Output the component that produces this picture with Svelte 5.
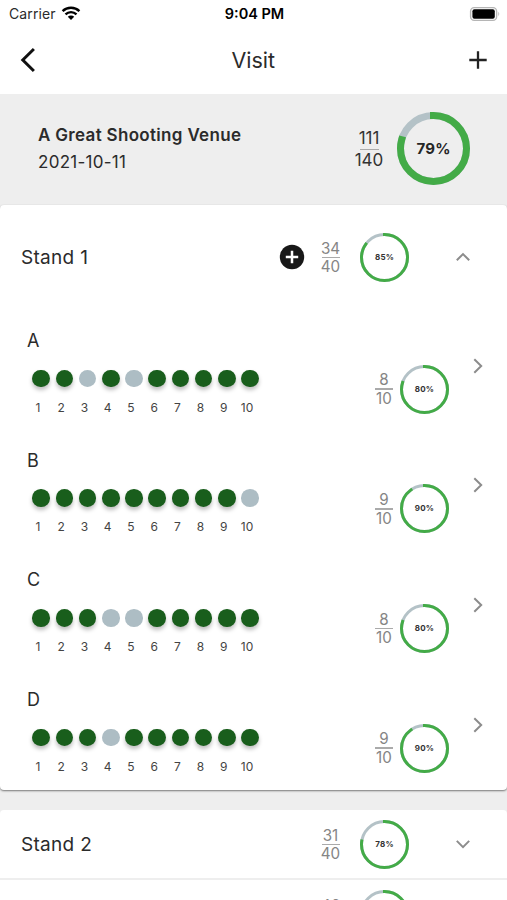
<script lang="ts">
  type Round = { name: string; shots: number[] }

  const rounds: Round[] = [
    { name: 'A', shots: [1, 1, 0, 1, 0, 1, 1, 1, 1, 1] },
    { name: 'B', shots: [1, 1, 1, 1, 1, 1, 1, 1, 1, 0] },
    { name: 'C', shots: [1, 1, 1, 0, 0, 1, 1, 1, 1, 1] },
    { name: 'D', shots: [1, 1, 1, 0, 1, 1, 1, 1, 1, 1] },
  ]

  const collapsed = [
    { name: 'Stand 2', hits: 31, total: 40 },
    { name: 'Stand 3', hits: 46, total: 60 },
  ]

  const hitCount = (r: Round) => r.shots.filter((s) => s === 1).length
  const pct = (hits: number, total: number) => Math.round((hits / total) * 100)
</script>

{#snippet gauge(hits: number, total: number, size: number, stroke: number)}
  {@const r = (size - stroke) / 2}
  <svg class="gauge" class:big={size > 60} width={size} height={size} viewBox="0 0 {size} {size}">
    <circle class="track" cx={size / 2} cy={size / 2} {r} stroke-width={stroke} />
    <circle
      class="value" cx={size / 2} cy={size / 2} {r} stroke-width={stroke} pathLength="100"
      stroke-dasharray="{(hits / total) * 100} 100" transform="rotate(-90 {size / 2} {size / 2})"
    />
    <text x={size / 2} y={size / 2} dy="0.36em">{pct(hits, total)}%</text>
  </svg>
{/snippet}

{#snippet fraction(hits: number, total: number)}
  <div class="fraction">
    <span>{hits}</span>
    <i class="bar"></i>
    <span>{total}</span>
  </div>
{/snippet}

<div class="screen">
  <div class="status">
    <div class="carrier">
      <span>Carrier</span>
      <svg width="20" height="15" viewBox="0 0 20 15">
        <path d="M1.6 5.2A12 12 0 0 1 18.4 5.2M4.5 8.3A8 8 0 0 1 15.5 8.3" fill="none" stroke="#000" stroke-width="2.4" />
        <path d="M10 14L6.8 10.7A4.6 4.6 0 0 1 13.2 10.7Z" />
      </svg>
    </div>
    <span class="clock">9:04 PM</span>
    <svg class="battery" width="32" height="16" viewBox="0 0 32 16">
      <rect x="1.6" y="1.6" width="26" height="12.8" rx="3.6" fill="#fff" stroke="#b5b5b5" stroke-width="1.4" />
      <rect x="3.4" y="3.3" width="22.4" height="9.4" rx="2" />
      <path d="M29.3 5.8Q31.2 8 29.3 10.2Z" fill="#b5b5b5" />
    </svg>
  </div>

  <div class="navbar">
    <svg width="20" height="28" viewBox="0 0 20 28"><path d="M15.9 3L4.8 14L15.9 25" fill="none" stroke="#111" stroke-width="3" /></svg>
    <h1>Visit</h1>
    <svg width="20" height="20" viewBox="0 0 20 20"><path d="M10 1.3V18.7M1.3 10H18.7" stroke="#222" stroke-width="2.3" /></svg>
  </div>

  <div class="venue">
    <div class="venue-info">
      <strong>A Great Shooting Venue</strong>
      <span>2021-10-11</span>
    </div>
    {@render fraction(111, 140)}
    {@render gauge(111, 140, 73, 7)}
  </div>

  <section class="card open">
    <div class="stand-head">
      <span class="stand-name">Stand 1</span>
      <svg class="add" width="26" height="26" viewBox="0 0 26 26">
        <circle cx="13" cy="13" r="12.2" fill="#181818" />
        <path d="M13 6.8V19.2M6.8 13H19.2" stroke="#fff" stroke-width="2.5" />
      </svg>
      {@render fraction(34, 40)}
      {@render gauge(34, 40, 49, 3)}
      <svg class="chev" width="18" height="12" viewBox="0 0 18 12"><path d="M2.8 9.3L9 3.1L15.2 9.3" /></svg>
    </div>
    {#each rounds as round (round.name)}
      <div class="round">
        <div class="shots">
          <span class="round-name">{round.name}</span>
          <div class="dots">
            {#each round.shots as shot}
              <span class="cell"><i class="dot" class:hit={shot === 1}></i></span>
            {/each}
          </div>
          <div class="nums">
            {#each round.shots as _, i}
              <span class="cell">{i + 1}</span>
            {/each}
          </div>
        </div>
        <div class="score">
          {@render fraction(hitCount(round), round.shots.length)}
          {@render gauge(hitCount(round), round.shots.length, 49, 3)}
        </div>
        <svg class="chev go" width="12" height="18" viewBox="0 0 12 18"><path d="M2.3 2.2L9.2 9L2.3 15.8" /></svg>
      </div>
    {/each}
  </section>

  <section class="card">
    {#each collapsed as stand (stand.name)}
      <div class="stand-head closed">
        <span class="stand-name">{stand.name}</span>
        {@render fraction(stand.hits, stand.total)}
        {@render gauge(stand.hits, stand.total, 49, 3)}
        <svg class="chev" width="18" height="12" viewBox="0 0 18 12"><path d="M2.8 2.9L9 9.1L15.2 2.9" /></svg>
      </div>
    {/each}
  </section>
</div>

<style>
:global(body) { background: #eee; overflow: hidden; }
.screen {
  width: 507px; height: 900px; overflow: hidden; background: #eee; color: #2b2b2b;
  font-family: Inter, "Liberation Sans", sans-serif; display: flex; flex-direction: column;
}
.screen > * { flex: 0 0 auto; box-sizing: border-box; }
svg { display: block; flex: 0 0 auto; }

.status {
  display: grid; grid-template-columns: 1fr auto 1fr; align-items: center;
  height: 28px; padding: 0 7px 1px 9px; background: #fff; font-size: 14px;
}
.carrier { display: flex; align-items: center; gap: 5px; letter-spacing: 0.1px; }
.clock { font-weight: 600; font-size: 14.5px; color: #000; }
.battery { justify-self: end; margin-right: -1px; }

.navbar {
  display: grid; grid-template-columns: 1fr auto 1fr; align-items: center;
  height: 66px; padding: 0 19.5px 2px 18px; background: #fff;
}
.navbar h1 { margin: 0; padding-left: 1px; font-size: 21.5px; font-weight: 400; line-height: 28px; }
.navbar svg:last-child { justify-self: end; }

.venue { display: flex; align-items: center; height: 110.5px; padding: 0 37px 1px 38px; }
.venue-info { flex: 1; display: flex; flex-direction: column; padding-top: 1px; font-size: 17px; line-height: 27px; }
.venue-info strong { font-weight: 600; letter-spacing: 0.32px; }
.venue-info span { letter-spacing: 0.27px; }
.venue .fraction { width: 34px; margin-right: 11px; padding-top: 1px; font-size: 17px; line-height: 20.5px; color: #333; }
.venue .bar { width: 19px; }

.fraction {
  display: flex; flex-direction: column; align-items: center; width: 24px;
  font-size: 15.2px; line-height: 17px; color: #858585;
}
.bar { width: 18px; height: 1.5px; background: #aaa; }

.gauge circle { fill: none; }
.track { stroke: #b4c2c7; }
.value { stroke: #43ab47; stroke-linecap: square; }
.gauge text { font-size: 8px; font-weight: 700; letter-spacing: 0.2px; text-anchor: middle; fill: #333; }
.gauge.big text { font-size: 15px; fill: #262626; }

.card { background: #fff; border-radius: 4px; }
.open { height: 585.5px; margin-bottom: 20px; box-shadow: 0 1px 2px rgba(0, 0, 0, 0.5); }
.stand-head { display: flex; align-items: center; box-sizing: border-box; height: 106.8px; padding: 0 35px 1.5px 21px; }
.stand-head.closed { height: 70px; border-bottom: 2px solid #eee; padding-bottom: 0; }
.stand-name { flex: 1; font-size: 19px; letter-spacing: 0.3px; padding-top: 1px; }
.add { margin-right: 13px; }
.stand-head .fraction { width: 26px; margin-right: 16.5px; padding-top: 1px; }
.stand-head .chev { margin-left: 45px; }
.chev path { fill: none; stroke: #8c8c8c; stroke-width: 2; }

.round { display: flex; box-sizing: border-box; height: 119.67px; padding: 17px 23px 0 27px; }
.shots { flex: 1; }
.round-name { display: block; padding-top: 0.6px; font-size: 18px; line-height: 24px; }
.dots { display: flex; margin: 16.9px 0 0 2.5px; }
.nums { display: flex; margin: 12.2px 0 0 -0.6px; font-size: 12px; line-height: 16px; color: #444; }
.cell { width: 23.22px; display: flex; justify-content: center; }
.dot { width: 17.6px; height: 17.6px; border-radius: 50%; background: #adbdc4; }
.dot.hit { background: #195e1c; box-shadow: 0 3px 4px rgba(0, 0, 0, 0.26); }
.score { display: flex; align-items: center; align-self: flex-start; gap: 3.5px; padding-top: 36.3px; }
.go { margin: 28.3px 0 0 23.5px; }
</style>
